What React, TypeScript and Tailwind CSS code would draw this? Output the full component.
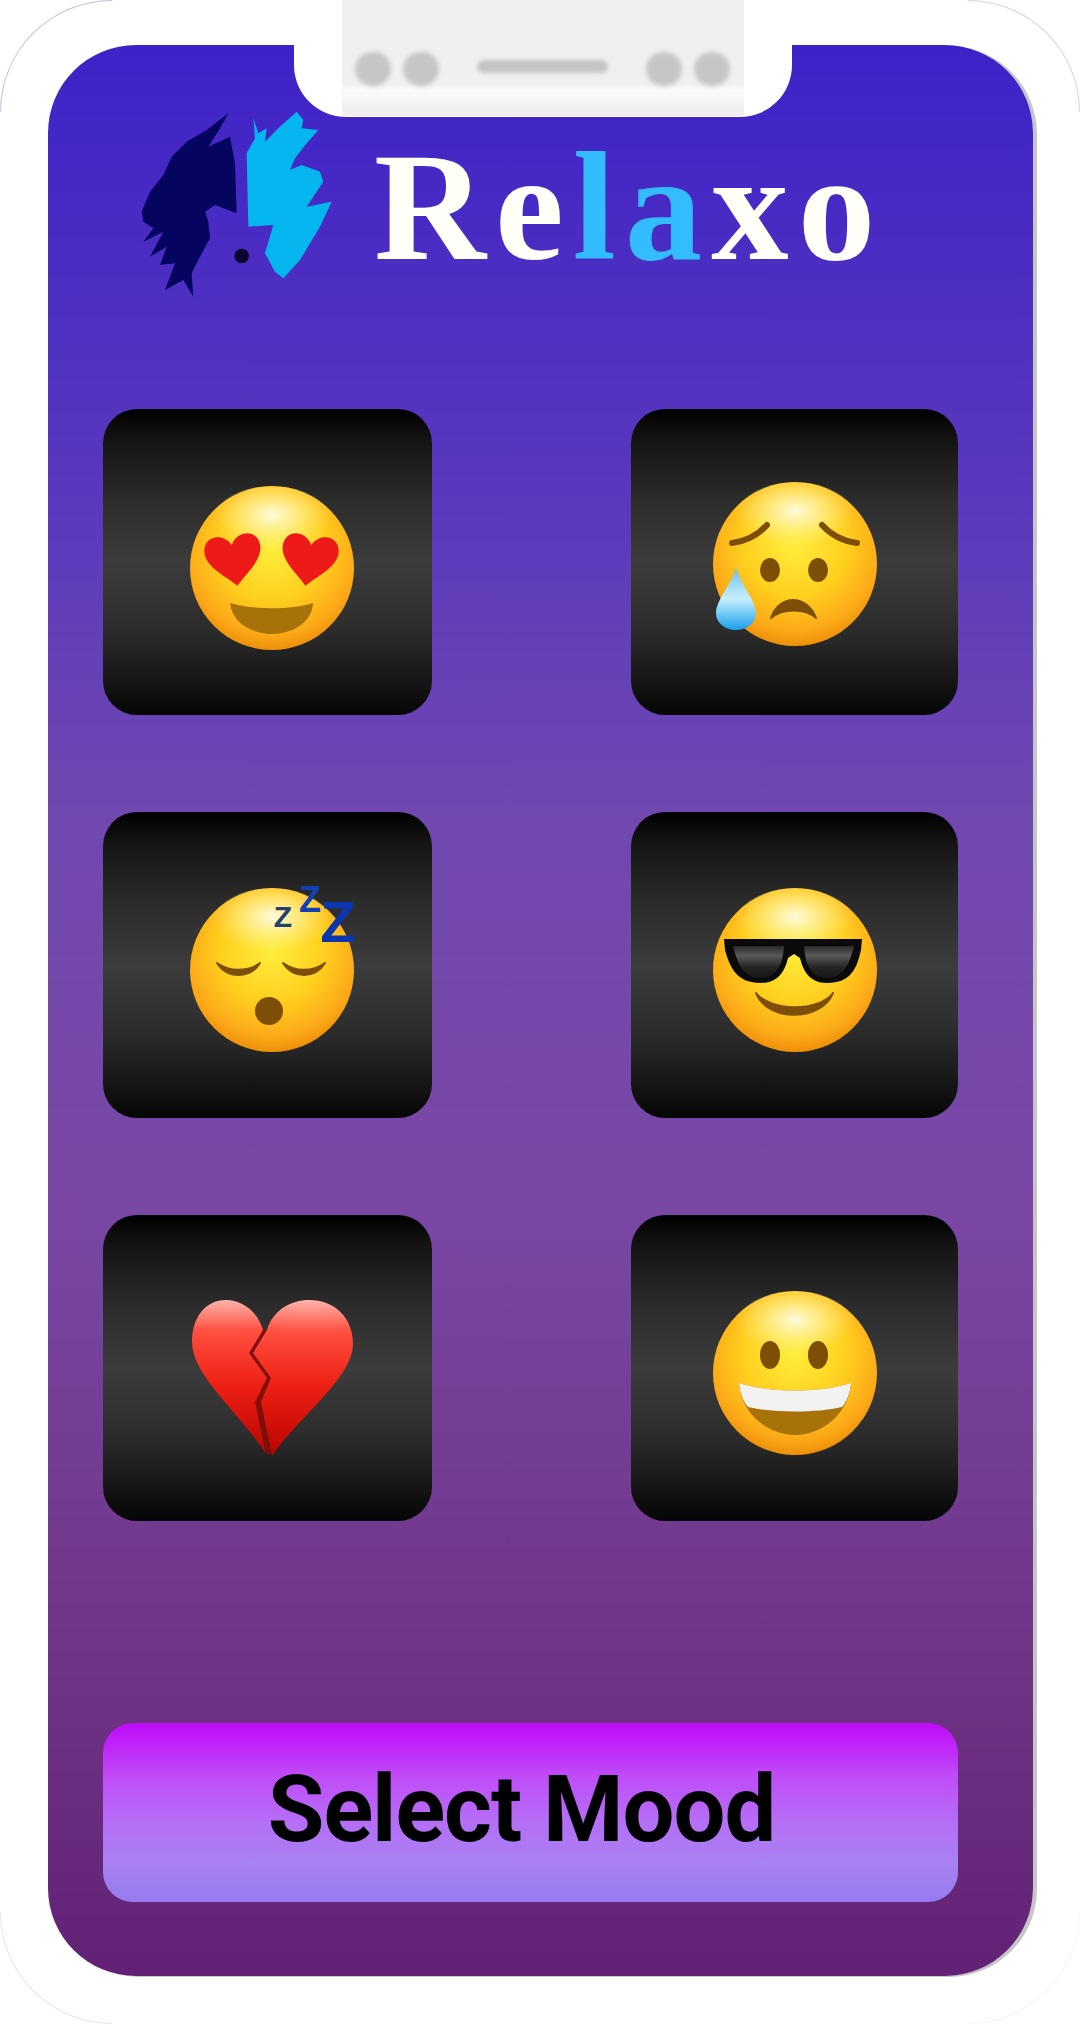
import React from 'react'

// shared face: pale highlight at the top, orange towards the chin and rim
function Face() {
    return (
        <>
            <defs>
                <radialGradient id="faceFill" cx="50%" cy="38%" r="64%">
                    <stop offset="0%" stopColor="#ffee3c" />
                    <stop offset="50%" stopColor="#ffcf1e" />
                    <stop offset="82%" stopColor="#fca918" />
                    <stop offset="100%" stopColor="#ea8a06" />
                </radialGradient>
                <radialGradient id="faceShine" cx="50%" cy="40%" r="50%">
                    <stop offset="0%" stopColor="#fffde8" stopOpacity="0.95" />
                    <stop offset="100%" stopColor="#fff6a0" stopOpacity="0" />
                </radialGradient>
            </defs>
            <circle r="82" fill="url(#faceFill)" />
            <ellipse cy="-46" rx="60" ry="36" fill="url(#faceShine)" />
        </>
    )
}

function Emoji({ dx, dy, children }: { dx: number; dy: number; children: React.ReactNode }) {
    return (
        <svg width="220" height="220" viewBox="-110 -110 220 220">
            <g transform={`translate(${dx} ${dy})`}>{children}</g>
        </svg>
    )
}

const brown = '#7d4f06'

function HeartEyes() {
    const heart = 'M0 25 C-10 14 -30 2 -28 -14 C-26 -29 -7 -30 0 -16 C7 -30 26 -29 28 -14 C30 2 10 14 0 25 Z'
    return (
        <Emoji dx={4} dy={6}>
            <Face />
            <g transform="translate(-38 -7) rotate(-8)"><path d={heart} fill="#ee1a1a" /></g>
            <g transform="translate(37 -7) rotate(8)"><path d={heart} fill="#ee1a1a" /></g>
            <path d="M-42 35 C-20 42 20 42 41 35 C40 55 20 66 0 66 C-20 66 -40 55 -42 35 Z" fill="#a8720a" />
        </Emoji>
    )
}

function SadTear() {
    return (
        <Emoji dx={0} dy={2}>
            <Face />
            <path d="M-63 -21 C-48 -23 -37 -29 -28 -39" fill="none" stroke={brown} strokeWidth="6" strokeLinecap="round" />
            <path d="M62 -21 C47 -23 36 -29 27 -39" fill="none" stroke={brown} strokeWidth="6" strokeLinecap="round" />
            <ellipse cx="-25" cy="6" rx="10" ry="12" fill={brown} />
            <ellipse cx="23" cy="6" rx="10" ry="12" fill={brown} />
            <path d="M-24 54 C-16 30 12 30 21 54 C10 44 -12 44 -24 54 Z" fill={brown} stroke={brown} strokeWidth="2" strokeLinejoin="round" />
            <defs>
                <linearGradient id="dropFill" x1="0" y1="0" x2="0" y2="1">
                    <stop offset="0%" stopColor="#6cbde8" />
                    <stop offset="50%" stopColor="#c5effc" />
                    <stop offset="100%" stopColor="#1b9fee" />
                </linearGradient>
            </defs>
            <path d="M-59 3 C-55 20 -39 36 -39 49 C-39 59 -48 66 -59 66 C-70 66 -79 59 -79 49 C-79 36 -63 20 -59 3 Z" fill="url(#dropFill)" />
        </Emoji>
    )
}

function Sleeping() {
    return (
        <Emoji dx={4} dy={5}>
            <Face />
            <path d="M-55 -7 C-45 9 -22 9 -12 -7 C-24 2 -43 2 -55 -7 Z" fill={brown} stroke={brown} strokeWidth="2" strokeLinejoin="round" />
            <path d="M11 -7 C21 9 43 9 53 -7 C41 2 23 2 11 -7 Z" fill={brown} stroke={brown} strokeWidth="2" strokeLinejoin="round" />
            <ellipse cx="-3" cy="41" rx="14" ry="14" fill={brown} />
            <g fontFamily='"Liberation Sans", sans-serif' fontWeight="700" textAnchor="middle">
                <text x="11" y="-43" fontSize="30" fill="#24406f">Z</text>
                <text x="38" y="-58" fontSize="36" fill="#1240b4">Z</text>
                <text x="66" y="-28" fontSize="58" fill="#0c36b0">Z</text>
            </g>
        </Emoji>
    )
}

function Sunglasses() {
    return (
        <Emoji dx={0} dy={5}>
            <Face />
            <defs>
                <linearGradient id="lensFill" x1="0" y1="0" x2="0" y2="1">
                    <stop offset="0%" stopColor="#2a2a2a" />
                    <stop offset="30%" stopColor="#5a5a5a" />
                    <stop offset="65%" stopColor="#262626" />
                    <stop offset="100%" stopColor="#161616" />
                </linearGradient>
            </defs>
            <path
                d="M-71 -31 L67 -31 L66 -20 C62 -2 56 13 32 13 C14 13 8 0 5 -12 L-1 -16 L-7 -12 C-10 0 -16 13 -34 13 C-58 13 -65 -2 -70 -20 Z"
                fill="#0a0a0a"
            />
            <path d="M-62 -24 L-11 -24 C-12 -6 -18 8 -35 8 C-52 8 -58 -8 -62 -24 Z" fill="url(#lensFill)" />
            <path d="M59 -24 L9 -24 C10 -6 16 8 32 8 C49 8 55 -8 59 -24 Z" fill="url(#lensFill)" />
            <path d="M-39 23 C-28 52 26 52 38 23 C24 42 -24 42 -39 23 Z" fill={brown} stroke={brown} strokeWidth="2" strokeLinejoin="round" />
        </Emoji>
    )
}

function BrokenHeart() {
    return (
        <Emoji dx={5} dy={10}>
            <defs>
                <linearGradient id="heartFill" x1="0" y1="0" x2="0" y2="1">
                    <stop offset="0%" stopColor="#ffb4ac" />
                    <stop offset="20%" stopColor="#ff5040" />
                    <stop offset="55%" stopColor="#ee2014" />
                    <stop offset="100%" stopColor="#b80400" />
                </linearGradient>
            </defs>
            <path d="M-10 -48 L-24 -25 L-6 0 L-18 24 L-6 76 L-2 76 L-12 24 L-2 0 L-20 -25 L-6 -48 Z" fill="#8a0a05" />
            <path
                d="M-10 -48 C-16 -68 -32 -78 -47 -78 C-68 -78 -81 -60 -81 -36 C-81 -2 -32 36 -7 76 L-18 24 L-6 0 L-24 -25 Z"
                fill="url(#heartFill)"
            />
            <path
                d="M-6 -48 C0 -68 18 -78 36 -78 C62 -78 80 -60 80 -34 C80 0 26 38 -1 78 L-12 24 L-2 0 L-20 -25 Z"
                fill="url(#heartFill)"
            />
        </Emoji>
    )
}

function Grinning() {
    return (
        <Emoji dx={0} dy={5}>
            <Face />
            <ellipse cx="-25" cy="-18" rx="10" ry="14" fill={brown} />
            <ellipse cx="23" cy="-18" rx="10" ry="14" fill={brown} />
            <path d="M-56 10 C-26 20 26 20 56 10 C54 40 28 62 0 62 C-28 62 -54 40 -56 10 Z" fill="#a8720a" />
            <path d="M-56 10 C-26 20 26 20 56 10 C55 20 52 28 47 34 C22 40 -22 40 -47 34 C-52 28 -55 20 -56 10 Z" fill="#f2f2f2" />
        </Emoji>
    )
}

function Logo() {
    return (
        <svg width="240" height="210" viewBox="0 0 720 630" className="blur-[0.5px]">
            <path
                d="M325 40 L260 90 L200 125 L155 170 L130 225 L90 275 L65 335 L70 365 L100 385 L70 425 L130 395 L90 470 L140 440 L120 495 L165 490 L135 570 L190 540 L220 590 L215 520 L240 470 L270 415 L265 365 L255 335 L285 315 L350 340 L345 190 L330 110 L265 140 L300 85 Z"
                fill="#05055f"
            />
            <path
                d="M400 55 L415 100 L440 85 L435 125 L475 85 L530 35 L550 60 L545 85 L595 90 L560 130 L525 175 L510 210 L545 195 L600 215 L610 245 L560 320 L635 305 L600 380 L540 480 L490 535 L465 515 L435 460 L460 375 L385 380 L380 160 L405 115 Z"
                fill="#05b6ee"
            />
            <circle cx="365" cy="468" r="22" fill="#08082e" />
        </svg>
    )
}

function MoodCard({ children }: { children: React.ReactNode }) {
    return (
        <div className="flex h-[306px] items-center justify-center rounded-[34px] bg-[linear-gradient(to_bottom,#000000_0%,#141414_10%,#2c2c2c_30%,#3c3c3c_50%,#2c2c2c_72%,#141414_90%,#050505_100%)]">
            {children}
        </div>
    )
}

function Corner({ className }: { className: string }) {
    return <div className={`absolute h-[112px] w-[112px] ${className}`} />
}

export default function App() {
    return (
        <div className="relative h-[2024px] w-[1080px] overflow-hidden bg-white pl-[48px] pt-[45px]">
            {/* faint outline of the phone body */}
            <Corner className="left-0 top-0 rounded-tl-[112px] border-l border-t border-[#c4c0e0]" />
            <Corner className="right-0 top-0 rounded-tr-[112px] border-r border-t border-[#d4d2e6]" />
            <Corner className="bottom-0 left-0 rounded-bl-[112px] border-b border-l border-[#e4e4e4]" />
            <Corner className="bottom-0 right-0 rounded-br-[112px] border-b border-r border-[#f6f6f6]" />

            {/* screen */}
            <div className="relative h-[1931px] w-[985px] rounded-[88px] bg-[linear-gradient(to_bottom,#3d22c8_0%,#5c3abc_25%,#7048b0_40%,#7a47a5_60%,#6e3384_85%,#622175_100%)] pl-[55px] pt-[55px] shadow-[4px_1px_0_#c6c6c6]">
                {/* logo */}
                <div className="ml-[17px] flex h-[210px] items-start gap-[14px]">
                    <Logo />
                    <div
                        className="mt-[30px] text-[155px] font-bold leading-none tracking-[9px] text-[#fffff8]"
                        style={{ fontFamily: '"Liberation Serif", serif' }}
                    >
                        Re<span className="text-[#33bcff]">la</span>xo
                    </div>
                </div>

                {/* mood grid */}
                <div className="mt-[99px] grid w-[855px] grid-cols-[329px_327px] justify-between gap-y-[97px]">
                    <MoodCard><HeartEyes /></MoodCard>
                    <MoodCard><SadTear /></MoodCard>
                    <MoodCard><Sleeping /></MoodCard>
                    <MoodCard><Sunglasses /></MoodCard>
                    <MoodCard><BrokenHeart /></MoodCard>
                    <MoodCard><Grinning /></MoodCard>
                </div>

                {/* button */}
                <button className="mt-[202px] flex h-[179px] w-[855px] items-center justify-center rounded-[30px] bg-[linear-gradient(to_bottom,#bf0af9_0%,#c04cf8_30%,#b56ef6_55%,#a880f1_78%,#967cf0_100%)]">
                    <span
                        className="mb-[6px] mr-[18px] text-[92px] font-bold leading-none tracking-[-1px] text-black"
                        style={{ fontFamily: 'Roboto, sans-serif' }}
                    >
                        Select Mood
                    </span>
                </button>
            </div>

            {/* notch, sits over the top of the screen */}
            <div className="absolute left-[294px] top-0 h-[117px] w-[498px] rounded-b-[52px] bg-white">
                <div className="ml-[48px] flex h-[116px] w-[402px] items-start bg-[linear-gradient(to_bottom,#f0f0f0_0%,#f0f0f0_72%,#fafafa_78%,#f8f8f8_84%,#f0f0f0_92%,#f0f0f0_100%)] pl-[13px] pt-[52px]">
                    <div className="h-[34px] w-[36px] rounded-full bg-[#c6c6c6] blur-[2px]" />
                    <div className="ml-[12px] h-[34px] w-[36px] rounded-full bg-[#c6c6c6] blur-[2px]" />
                    <div className="ml-[38px] mt-[8px] h-[13px] w-[131px] rounded-full bg-[#c4c4c4] blur-[2px]" />
                    <div className="ml-[38px] h-[34px] w-[36px] rounded-full bg-[#c6c6c6] blur-[2px]" />
                    <div className="ml-[12px] h-[34px] w-[36px] rounded-full bg-[#c6c6c6] blur-[2px]" />
                </div>
            </div>
        </div>
    )
}
